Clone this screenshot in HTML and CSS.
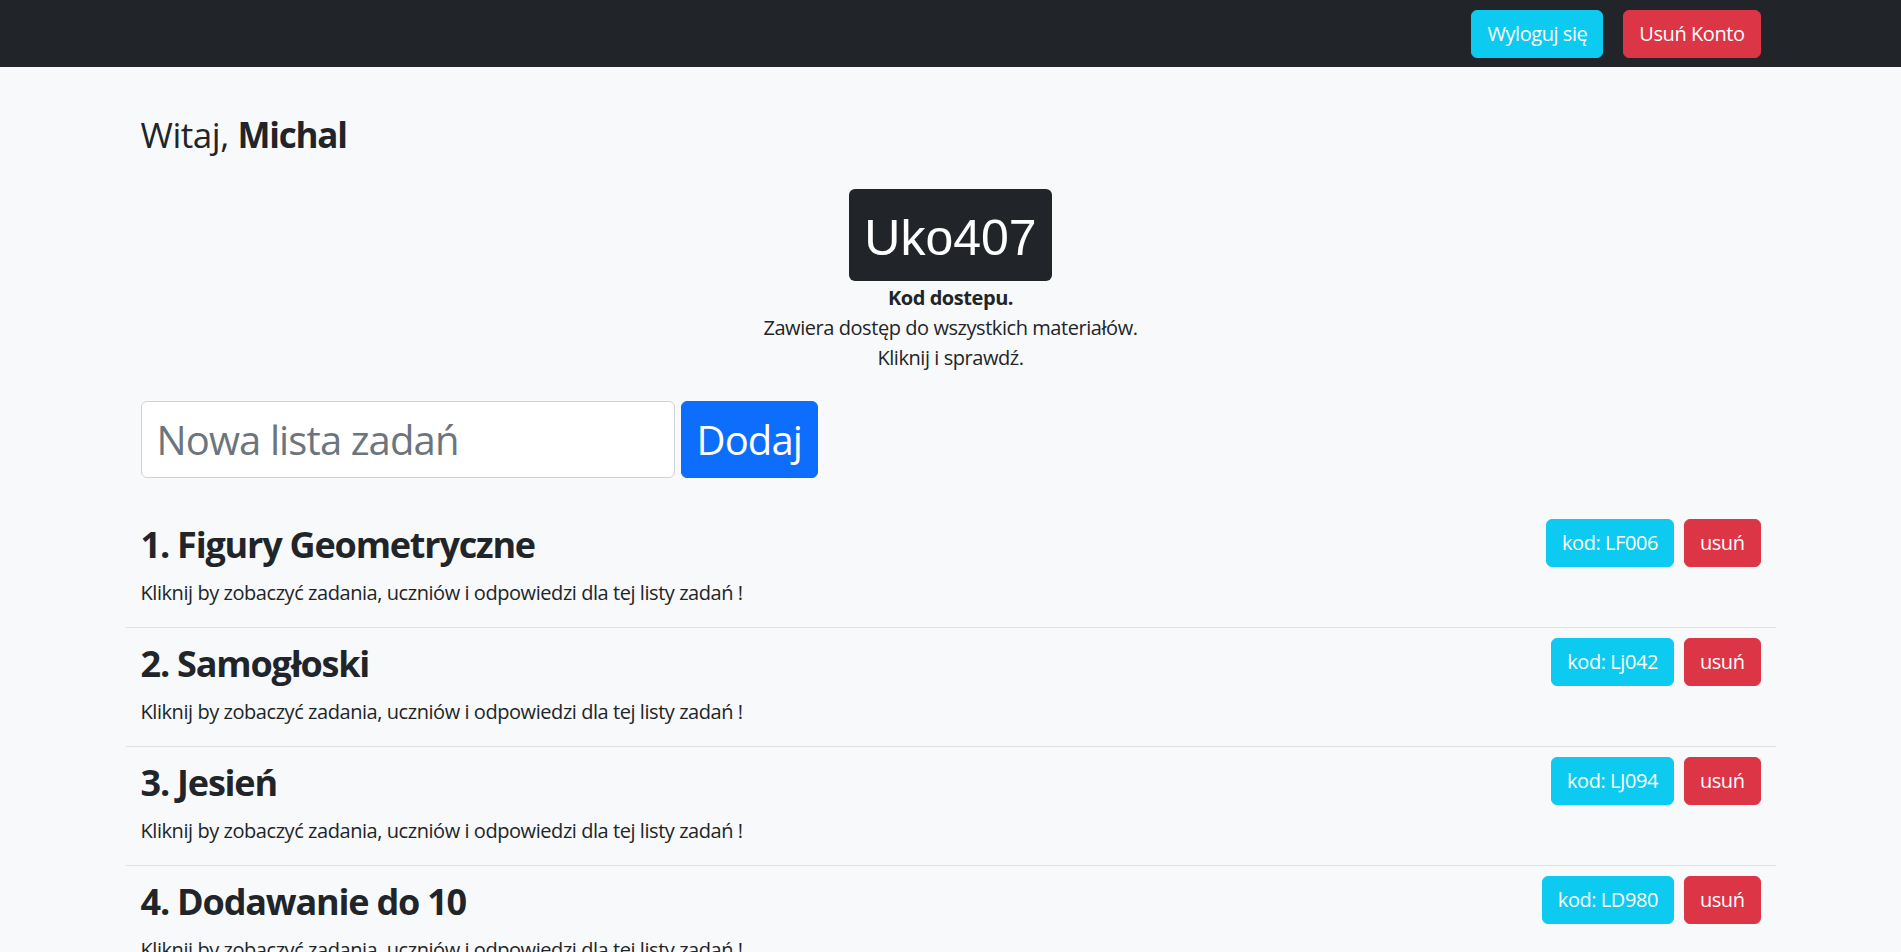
FILE: index.html
```html
<!DOCTYPE html>
<html lang="pl">
<head>
<meta charset="utf-8">
<title>Panel nauczyciela</title>
<link rel="stylesheet" href="styles.css">
</head>
<body>
<nav class="navbar">
  <div class="navbar-inner">
    <button class="btn btn-info">Wyloguj się</button>
    <button class="btn btn-danger">Usuń Konto</button>
  </div>
</nav>
<main class="container">
  <h3 class="greeting">Witaj, <strong>Michal</strong></h3>
  <div class="access">
    <div class="access-code">Uko407</div>
    <p class="access-text"><strong>Kod dostepu.</strong><br>Zawiera dostęp do wszystkich materiałów.<br>Kliknij i sprawdź.</p>
  </div>
  <form class="add-form">
    <input class="list-input" type="text" placeholder="Nowa lista zadań">
    <button class="btn btn-primary btn-big" type="button">Dodaj</button>
  </form>
  <ul class="task-lists">
    <li class="task-item">
      <div class="task-info">
        <h2 class="task-title">1. Figury Geometryczne</h2>
        <p class="task-desc">Kliknij by zobaczyć zadania, uczniów i odpowiedzi dla tej listy zadań !</p>
      </div>
      <div class="task-actions">
        <button class="btn btn-info">kod: LF006</button>
        <button class="btn btn-danger">usuń</button>
      </div>
    </li>
    <li class="task-item">
      <div class="task-info">
        <h2 class="task-title">2. Samogłoski</h2>
        <p class="task-desc">Kliknij by zobaczyć zadania, uczniów i odpowiedzi dla tej listy zadań !</p>
      </div>
      <div class="task-actions">
        <button class="btn btn-info">kod: Lj042</button>
        <button class="btn btn-danger">usuń</button>
      </div>
    </li>
    <li class="task-item">
      <div class="task-info">
        <h2 class="task-title">3. Jesień</h2>
        <p class="task-desc">Kliknij by zobaczyć zadania, uczniów i odpowiedzi dla tej listy zadań !</p>
      </div>
      <div class="task-actions">
        <button class="btn btn-info">kod: LJ094</button>
        <button class="btn btn-danger">usuń</button>
      </div>
    </li>
    <li class="task-item">
      <div class="task-info">
        <h2 class="task-title">4. Dodawanie do 10</h2>
        <p class="task-desc">Kliknij by zobaczyć zadania, uczniów i odpowiedzi dla tej listy zadań !</p>
      </div>
      <div class="task-actions">
        <button class="btn btn-info">kod: LD980</button>
        <button class="btn btn-danger">usuń</button>
      </div>
    </li>
  </ul>
</main>
</body>
</html>
```

FILE: styles.css
```css
* {
  box-sizing: border-box;
}

html, body {
  margin: 0;
  padding: 0;
}

body {
  background: #f8f9fa;
  color: #212529;
  font-family: "Segoe UI", "Open Sans", "Noto Sans", sans-serif;
  font-size: 20px;
  line-height: 30px;
  letter-spacing: -0.022em;
}

.navbar {
  background: #212529;
  height: 67px;
  display: flex;
  align-items: center;
}

.navbar-inner {
  width: 1620px;
  margin: 0 auto;
  display: flex;
  justify-content: flex-end;
  gap: 20px;
}

.btn {
  font-family: inherit;
  font-size: 20px;
  line-height: 30px;
  letter-spacing: -0.022em;
  padding: 8px 15px;
  border: 1px solid transparent;
  border-radius: 6px;
  color: #fff;
  cursor: pointer;
  height: 48px;
}

.btn-info {
  background: #0dcaf0;
  border-color: #0dcaf0;
}

.btn-danger {
  background: #dc3545;
  border-color: #dc3545;
}

.btn-primary {
  background: #0d6efd;
  border-color: #0d6efd;
}

.container {
  width: 1650px;
  margin: 0 auto;
}

.greeting {
  margin: 47px 0 0;
  padding: 0 15px;
  font-size: 35px;
  line-height: 42px;
  font-weight: 400;
}

.greeting strong {
  font-weight: 700;
  letter-spacing: -1.2px;
}

.access {
  margin-top: 33px;
  display: flex;
  flex-direction: column;
  align-items: center;
}

.access-code {
  background: #212529;
  color: #fff;
  font-family: "Liberation Sans", Arial, sans-serif;
  font-size: 50px;
  line-height: 58px;
  letter-spacing: 0;
  padding: 20px 15px 14px;
  border-radius: 6px;
}

.access-text {
  margin: 0;
  padding-top: 2px;
  text-align: center;
}

.access-text strong {
  font-weight: 700;
}

.add-form {
  margin: 28px 0 0;
  padding: 0 15px;
  display: flex;
  gap: 6px;
}

.list-input {
  width: 534px;
  height: 77px;
  font-family: inherit;
  font-size: 40px;
  line-height: 60px;
  letter-spacing: -0.022em;
  padding: 7px 15px;
  border: 1px solid #ced4da;
  border-radius: 6px;
  background: #fff;
  color: #212529;
}

.list-input::placeholder {
  color: #6c757d;
}

.btn-big {
  height: 77px;
  font-size: 40px;
  line-height: 60px;
  padding: 7px 15px;
}

.task-lists {
  list-style: none;
  margin: 31px 0 0;
  padding: 0;
}

.task-item {
  display: flex;
  justify-content: space-between;
  align-items: flex-start;
  padding: 10px 15px 19px;
  border-bottom: 1px solid #dee2e6;
}

.task-title {
  margin: 0 0 7px;
  font-size: 36px;
  line-height: 52px;
  font-weight: 700;
  letter-spacing: -1.2px;
}

.task-desc {
  margin: 0;
}

.task-actions {
  display: flex;
  gap: 10px;
}
```
